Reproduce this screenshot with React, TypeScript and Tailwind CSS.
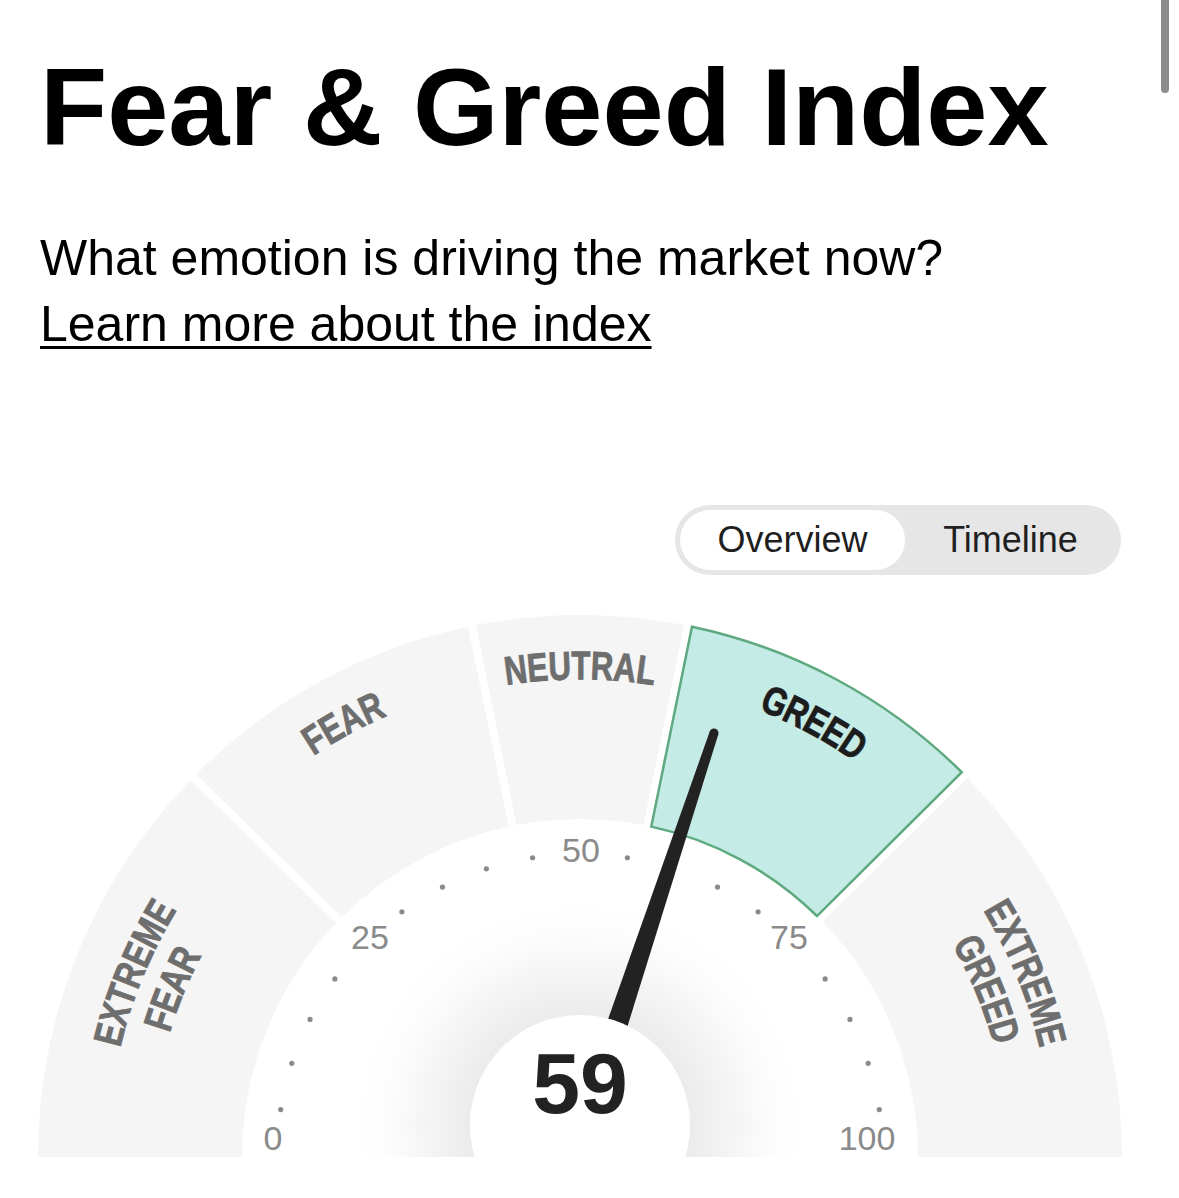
import React from "react";

const CX = 580;
const CY = 1157;
const R_OUT = 542;
const R_IN = 338;

// Arial-bold advance widths (em) for the caps used in the gauge labels
const CAP_W: Record<string, number> = {
  A: 0.722, D: 0.722, E: 0.667, F: 0.611, G: 0.778, L: 0.611,
  M: 0.833, N: 0.722, R: 0.722, T: 0.611, U: 0.722, X: 0.667,
};

const rad = (d: number) => (d * Math.PI) / 180;
const pt = (deg: number, r: number) => [CX + r * Math.cos(rad(deg)), CY - r * Math.sin(rad(deg))];

function sectorPath(a1: number, a2: number, hL: number, hR: number) {
  const off = (h: number, r: number) => (Math.asin(h / r) * 180) / Math.PI;
  const [x1, y1] = pt(a1 - off(hL, R_OUT), R_OUT);
  const [x2, y2] = pt(a2 + off(hR, R_OUT), R_OUT);
  const [x3, y3] = pt(a2 + off(hR, R_IN), R_IN);
  const [x4, y4] = pt(a1 - off(hL, R_IN), R_IN);
  return `M${x1} ${y1} A${R_OUT} ${R_OUT} 0 0 1 ${x2} ${y2} L${x3} ${y3} A${R_IN} ${R_IN} 0 0 0 ${x4} ${y4} Z`;
}

const segments = [
  { a1: 180, a2: 135.5, hL: 0, hR: 4, active: false },
  { a1: 135.5, a2: 101.5, hL: 4, hR: 4, active: false },
  { a1: 101.5, a2: 78.5, hL: 4, hR: 4, active: false },
  { a1: 78.5, a2: 44.8, hL: 4, hR: 4, active: true },
  { a1: 44.8, a2: 0, hL: 4, hR: 0, active: false },
];

function ArcText({ text, theta, r, fill }: { text: string; theta: number; r: number; fill: string }) {
  const fs = 40;
  const sx = 0.78;
  const ls = 0.5;
  const widths = text.split("").map((c) => CAP_W[c] * fs * sx + ls);
  const total = widths.reduce((a, b) => a + b, 0);
  let acc = 0;
  return (
    <g
      fill={fill}
      stroke={fill}
      strokeWidth={0.9}
      fontSize={fs}
      fontWeight={700}
      fontFamily="'Liberation Sans', Arial, sans-serif"
    >
      {text.split("").map((c, i) => {
        const mid = acc + widths[i] / 2;
        acc += widths[i];
        const ang = theta + (((total / 2 - mid) / r) * 180) / Math.PI;
        const [x, y] = pt(ang, r);
        return (
          <text
            key={i}
            transform={`translate(${x} ${y}) rotate(${90 - ang}) scale(${sx} 1)`}
            y={0.358 * fs}
            textAnchor="middle"
          >
            {c}
          </text>
        );
      })}
    </g>
  );
}

const numberLabels = [
  { v: "0", x: 273, y: 1150 },
  { v: "25", x: 370, y: 949 },
  { v: "50", x: 581, y: 862 },
  { v: "75", x: 789, y: 949 },
  { v: "100", x: 867, y: 1150 },
];

const dots = Array.from({ length: 19 }, (_, i) => (i + 1) * 5).filter((v) => v % 25 !== 0);

function Gauge() {
  const tip = [714, 733];
  const u = [96 / 304.5, -289 / 304.5];
  const n = [-u[1], u[0]];
  const len = 340;
  const base = [tip[0] - len * u[0], tip[1] - len * u[1]];
  const wb = 11;
  const wt = 4.5;
  const needle = `M${base[0] + n[0] * wb} ${base[1] + n[1] * wb} L${tip[0] + n[0] * wt} ${tip[1] + n[1] * wt} L${tip[0] - n[0] * wt} ${tip[1] - n[1] * wt} L${base[0] - n[0] * wb} ${base[1] - n[1] * wb} Z`;

  return (
    <svg className="mt-[25px] block" width={1179} height={598} viewBox="0 600 1179 598">
      <defs>
        <radialGradient id="glow" cx="580" cy="1125" r="230" gradientUnits="userSpaceOnUse">
          <stop offset="0.47" stopColor="#ebebeb" />
          <stop offset="0.72" stopColor="#f7f7f7" />
          <stop offset="1" stopColor="#ffffff" stopOpacity="0" />
        </radialGradient>
        <clipPath id="gaugeClip">
          <rect x="0" y="600" width="1179" height="557" />
        </clipPath>
      </defs>

      <g clipPath="url(#gaugeClip)">
        {segments.map((s, i) => (
          <path
            key={i}
            d={sectorPath(s.a1, s.a2, s.hL, s.hR)}
            fill={s.active ? "#c4ebe5" : "#f5f5f5"}
            stroke={s.active ? "#5ea97f" : "none"}
            strokeWidth={s.active ? 2.5 : 0}
          />
        ))}

        <ArcText text="EXTREME" theta={157.6} r={487} fill="#6e6e6e" />
        <ArcText text="FEAR" theta={157.6} r={443} fill="#6e6e6e" />
        <ArcText text="FEAR" theta={118.6} r={496} fill="#6e6e6e" />
        <ArcText text="NEUTRAL" theta={90} r={492} fill="#6e6e6e" />
        <ArcText text="GREED" theta={61.7} r={496} fill="#1c1c1c" />
        <ArcText text="EXTREME" theta={22.4} r={487} fill="#6e6e6e" />
        <ArcText text="GREED" theta={22.4} r={443} fill="#6e6e6e" />

        {dots.map((v) => {
          const [x, y] = pt(180 - v * 1.8, 303);
          return <circle key={v} cx={x} cy={y} r={2.6} fill="#8a8a8a" />;
        })}
        {numberLabels.map((l) => (
          <text
            key={l.v}
            x={l.x}
            y={l.y}
            textAnchor="middle"
            fontSize={34}
            fill="#8a8a8a"
            fontFamily="'Liberation Sans', Arial, sans-serif"
          >
            {l.v}
          </text>
        ))}

        <circle cx={580} cy={1125} r={230} fill="url(#glow)" />
        <path d={needle} fill="#222222" />
        <circle cx={tip[0]} cy={tip[1]} r={wt} fill="#222222" />
        <circle cx={580} cy={1125} r={110} fill="#ffffff" />
        <text
          x={580}
          y={1113}
          textAnchor="middle"
          fontSize={86}
          fontWeight={700}
          fill="#222222"
          fontFamily="'Liberation Sans', Arial, sans-serif"
        >
          59
        </text>
      </g>
    </svg>
  );
}

export default function App() {
  return (
    <div className="relative min-h-[1198px] w-full overflow-hidden bg-white font-['Liberation_Sans',Arial,sans-serif] text-black">
      {/* scroll indicator */}
      <div className="absolute right-[10px] top-[-10px] h-[103px] w-[8px] rounded-full bg-[#8c8c8c]" />

      <div className="px-[40px] pt-[52px]">
        <h1 className="text-[110px] font-bold leading-none">Fear &amp; Greed Index</h1>
        <p className="mt-[63px] text-[50px] leading-[66px]">What emotion is driving the market now?</p>
        <div className="text-[50px] leading-[66px]">
          <a href="#" className="underline decoration-[3px] underline-offset-[5px]">
            Learn more about the index
          </a>
        </div>
      </div>

      <div className="mt-[148px] flex justify-end pr-[58px]">
        <div className="flex h-[70px] rounded-full bg-[#e6e6e6] p-[5px] text-[36px] text-[#1f1f1f]">
          <button className="flex h-[60px] w-[225px] items-center justify-center rounded-full bg-white">
            Overview
          </button>
          <button className="flex h-[60px] w-[211px] items-center justify-center rounded-full">
            Timeline
          </button>
        </div>
      </div>

      <Gauge />
    </div>
  );
}
